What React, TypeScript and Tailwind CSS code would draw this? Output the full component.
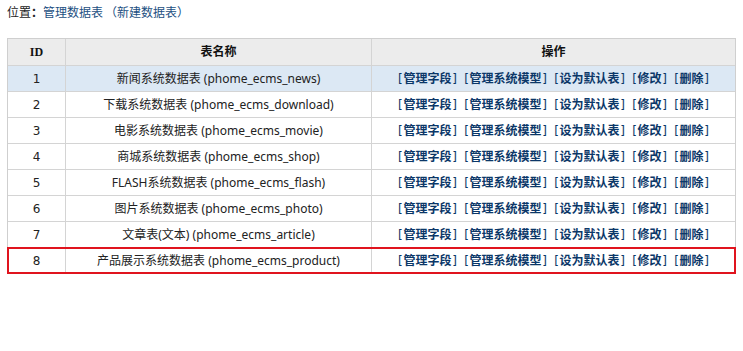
import React from 'react';

const rows = [
  { id: 1, name: '新闻系统数据表', tb: 'phome_ecms_news' },
  { id: 2, name: '下载系统数据表', tb: 'phome_ecms_download' },
  { id: 3, name: '电影系统数据表', tb: 'phome_ecms_movie' },
  { id: 4, name: '商城系统数据表', tb: 'phome_ecms_shop' },
  { id: 5, name: 'FLASH系统数据表', tb: 'phome_ecms_flash' },
  { id: 6, name: '图片系统数据表', tb: 'phome_ecms_photo' },
  { id: 7, name: '文章表(文本)', tb: 'phome_ecms_article' },
  { id: 8, name: '产品展示系统数据表', tb: 'phome_ecms_product' },
];

const ops = ['管理字段', '管理系统模型', '设为默认表', '修改', '删除'];

const font = { fontFamily: '"DejaVu Sans", "Noto Sans CJK SC", sans-serif' };
const nameFont = { fontFamily: '"Noto Sans", "Noto Sans CJK SC", sans-serif' };

const Row: React.FC<{ id: number; name: string; tb: string; highlight?: boolean; marked?: boolean }> = ({ id, name, tb, highlight, marked }) => (
  <div className={`relative flex h-[26px] border-t border-[#d4d4d4] text-[12px] text-[#222] ${highlight ? 'bg-[#dce8f4]' : 'bg-white'}`}>
    <div className="flex w-[58px] items-center justify-center border-r border-[#d4d4d4]">{id}</div>
    <div className="flex w-[306px] items-center justify-center border-r border-[#d4d4d4] whitespace-nowrap" style={nameFont}>
      {name} ({tb})
    </div>
    <div className="flex flex-1 items-center justify-center whitespace-nowrap font-bold text-[#0b3768]">
      {ops.map((o, i) => (
        <a key={o} href="#" className={i > 0 ? 'ml-[6px]' : ''}>
          <span className="inline-block w-[6px] text-center font-normal">[</span>
          {o}
          <span className="inline-block w-[6px] text-center font-normal">]</span>
        </a>
      ))}
    </div>
    {marked && <div className="pointer-events-none absolute -left-px -right-px -top-px -bottom-px border-2 border-[#e0141e]" />}
  </div>
);

export default function App() {
  return (
    <div className="h-[351px] w-[743px] bg-white" style={font}>
      <div className="px-[7px] pt-[5px] text-[12px] leading-[16px] text-[#222]">
        位置<span className="font-bold">：</span><a href="#" className="text-[#1c4f82]">管理数据表</a>
        <a href="#" className="ml-[2px] text-[#1c4f82]">（新建数据表）</a>
      </div>
      <div className="mx-[7px] mt-[17px] w-[729px] border border-[#cfcfcf]">
        <div className="flex h-[26px] bg-[#ececec] text-[12px] font-bold text-[#111]">
          <div className="flex w-[58px] items-center justify-center border-r border-[#d4d4d4]" style={{ fontFamily: '"Liberation Serif", serif' }}>ID</div>
          <div className="flex w-[306px] items-center justify-center border-r border-[#d4d4d4]">表名称</div>
          <div className="flex flex-1 items-center justify-center">操作</div>
        </div>
        {rows.map((r) => (
          <Row key={r.id} {...r} highlight={r.id === 1} marked={r.id === 8} />
        ))}
      </div>
    </div>
  );
}
